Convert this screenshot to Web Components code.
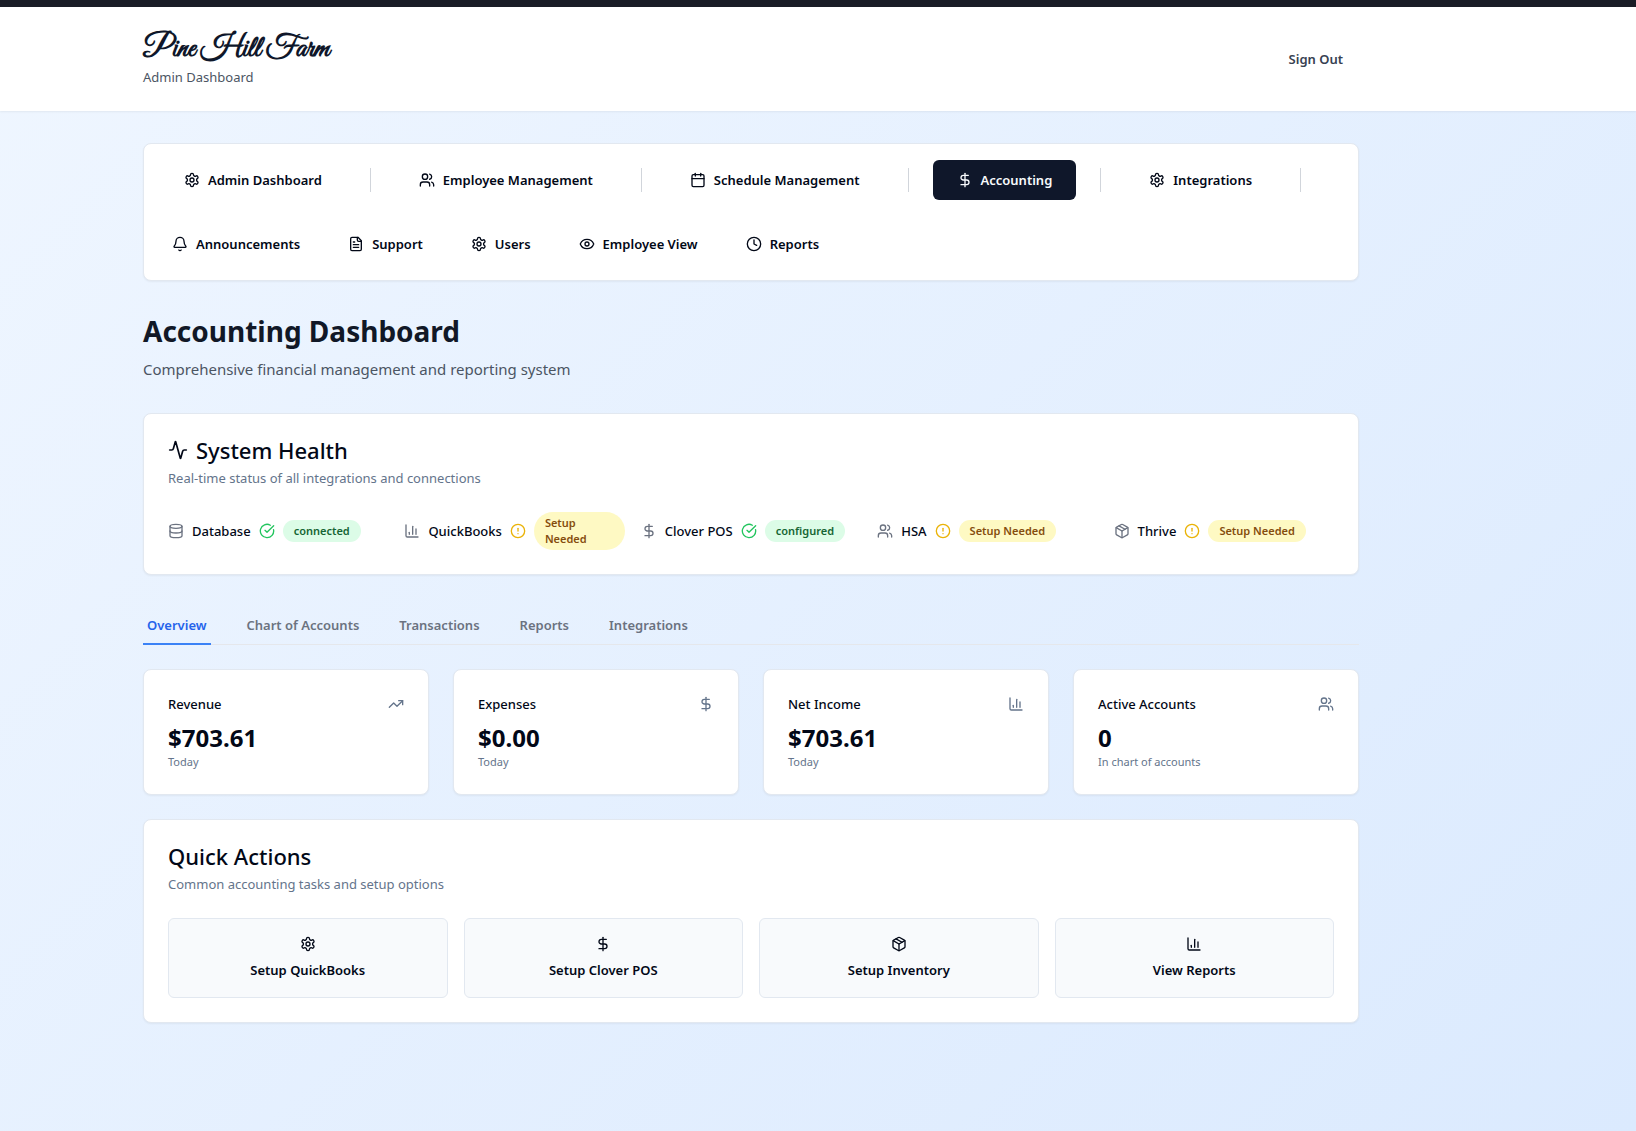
<!DOCTYPE html>
<html lang="en">
<head>
<meta charset="utf-8">
<title>Pine Hill Farm - Accounting Dashboard</title>
<style>
  body {
    margin: 0;
    min-height: 100vh;
    background: linear-gradient(135deg, #eff6ff 0%, #dbeafe 100%) no-repeat;
    font-family: "Noto Sans", "Open Sans", sans-serif;
    font-size: 13px;
    line-height: 20px;
    color: #020817;
  }
</style>
</head>
<body>
<farm-app></farm-app>
<script>
const ICONS = {
  settings: '<path d="M12.22 2h-.44a2 2 0 0 0-2 2v.18a2 2 0 0 1-1 1.73l-.43.25a2 2 0 0 1-2 0l-.15-.08a2 2 0 0 0-2.73.73l-.22.38a2 2 0 0 0 .73 2.73l.15.1a2 2 0 0 1 1 1.72v.51a2 2 0 0 1-1 1.74l-.15.09a2 2 0 0 0-.73 2.73l.22.38a2 2 0 0 0 2.73.73l.15-.08a2 2 0 0 1 2 0l.43.25a2 2 0 0 1 1 1.73V20a2 2 0 0 0 2 2h.44a2 2 0 0 0 2-2v-.18a2 2 0 0 1 1-1.73l.43-.25a2 2 0 0 1 2 0l.15.08a2 2 0 0 0 2.73-.73l.22-.39a2 2 0 0 0-.73-2.73l-.15-.08a2 2 0 0 1-1-1.74v-.5a2 2 0 0 1 1-1.74l.15-.09a2 2 0 0 0 .73-2.73l-.22-.38a2 2 0 0 0-2.73-.73l-.15.08a2 2 0 0 1-2 0l-.43-.25a2 2 0 0 1-1-1.73V4a2 2 0 0 0-2-2z"/><circle cx="12" cy="12" r="3"/>',
  users: '<path d="M16 21v-2a4 4 0 0 0-4-4H6a4 4 0 0 0-4 4v2"/><circle cx="9" cy="7" r="4"/><path d="M22 21v-2a4 4 0 0 0-3-3.87"/><path d="M16 3.13a4 4 0 0 1 0 7.75"/>',
  calendar: '<path d="M8 2v4"/><path d="M16 2v4"/><rect width="18" height="18" x="3" y="4" rx="2"/><path d="M3 10h18"/>',
  dollar: '<line x1="12" x2="12" y1="2" y2="22"/><path d="M17 5H9.5a3.5 3.5 0 0 0 0 7h5a3.5 3.5 0 0 1 0 7H6"/>',
  bell: '<path d="M10.268 21a2 2 0 0 0 3.464 0"/><path d="M3.262 15.326A1 1 0 0 0 4 17h16a1 1 0 0 0 .74-1.673C19.41 13.956 18 12.499 18 8A6 6 0 0 0 6 8c0 4.499-1.411 5.956-2.738 7.326"/>',
  file: '<path d="M15 2H6a2 2 0 0 0-2 2v16a2 2 0 0 0 2 2h12a2 2 0 0 0 2-2V7Z"/><path d="M14 2v4a2 2 0 0 0 2 2h4"/><path d="M10 9H8"/><path d="M16 13H8"/><path d="M16 17H8"/>',
  eye: '<path d="M2.062 12.348a1 1 0 0 1 0-.696 10.75 10.75 0 0 1 19.876 0 1 1 0 0 1 0 .696 10.75 10.75 0 0 1-19.876 0"/><circle cx="12" cy="12" r="3"/>',
  clock: '<circle cx="12" cy="12" r="10"/><polyline points="12 6 12 12 16 14"/>',
  activity: '<path d="M22 12h-2.48a2 2 0 0 0-1.93 1.46l-2.35 8.36a.25.25 0 0 1-.48 0L9.24 2.18a.25.25 0 0 0-.48 0l-2.35 8.36A2 2 0 0 1 4.49 12H2"/>',
  database: '<ellipse cx="12" cy="5" rx="9" ry="3"/><path d="M3 5V19A9 3 0 0 0 21 19V5"/><path d="M3 12A9 3 0 0 0 21 12"/>',
  chart: '<path d="M3 3v16a2 2 0 0 0 2 2h16"/><path d="M18 17V9"/><path d="M13 17V5"/><path d="M8 17v-3"/>',
  trending: '<polyline points="22 7 13.5 15.5 8.5 10.5 2 17"/><polyline points="16 7 22 7 22 13"/>',
  check: '<path d="M21.801 10A10 10 0 1 1 17 3.335"/><path d="m9 11 3 3L22 4"/>',
  alert: '<circle cx="12" cy="12" r="10"/><line x1="12" x2="12" y1="8" y2="12"/><line x1="12" x2="12.01" y1="16" y2="16"/>',
  box: '<path d="M11 21.73a2 2 0 0 0 2 0l7-4A2 2 0 0 0 21 16V8a2 2 0 0 0-1-1.73l-7-4a2 2 0 0 0-2 0l-7 4A2 2 0 0 0 3 8v8a2 2 0 0 0 1 1.73z"/><path d="M12 22V12"/><polyline points="3.29 7 12 12 20.71 7"/><path d="m7.5 4.27 9 5.15"/>'
};

const define = (name, render) => customElements.define(name, class extends HTMLElement {
  connectedCallback() {
    if (this.shadowRoot) return;
    this.attachShadow({ mode: 'open' }).innerHTML = render(this);
  }
});
const attr = (el, name) => el.getAttribute(name) || '';

/* Line icon; its size comes from --icon-size, its colour from the text. */
define('farm-icon', el => `
  <style>
    :host { display: block; flex: none; width: var(--icon-size, 16px); height: var(--icon-size, 16px); }
    svg { display: block; width: 100%; height: 100%; }
  </style>
  <svg viewBox="0 0 24 24" fill="none" stroke="currentColor" stroke-width="2" stroke-linecap="round" stroke-linejoin="round" aria-hidden="true">${ICONS[attr(el, 'name')]}</svg>`);

define('farm-card', () => `
  <style>
    :host { display: block; box-sizing: border-box; padding: 24px; background: #fff; border: 1px solid #e2e8f0; border-radius: 8px; box-shadow: 0 1px 2px rgb(0 0 0 / .05); }
  </style>
  <slot></slot>`);

define('farm-header', () => `
  <style>
    :host { display: block; background: #fff; border-top: 7px solid #1a1d26; box-shadow: 0 1px 2px rgb(0 0 0 / .06); padding-right: var(--page-gutter); }
    .inner { max-width: 1280px; margin: 0 auto; padding: 24px 32px; box-sizing: border-box; display: flex; justify-content: space-between; align-items: center; }
    .brand { margin: 0; font: 700 30px/36px "Great Vibes", "Liberation Serif", serif; color: #0f172a; }
    p { margin: 0; color: #4b5563; }
    button { font: inherit; font-weight: 600; color: #374151; background: none; border: 0; padding: 8px 16px; cursor: pointer; }
  </style>
  <header class="inner">
    <div><div class="brand">Pine Hill Farm</div><p>Admin Dashboard</p></div>
    <button type="button">Sign Out</button>
  </header>`);

define('nav-item', el => `
  <style>
    :host { display: block; }
    button { display: flex; align-items: center; gap: 8px; height: 40px; padding: 0 24px; border: 0; border-radius: 6px; background: none; color: inherit; font: inherit; font-weight: 600; white-space: nowrap; cursor: pointer; }
    :host([compact]) button { padding: 0 12px; }
    :host([active]) button { background: #0f172a; color: #f8fafc; }
  </style>
  <button type="button"><farm-icon name="${attr(el, 'icon')}"></farm-icon><slot></slot></button>`);

define('farm-nav', () => `
  <style>
    :host { display: block; }
    farm-card { padding: 16px; }
    nav { display: flex; flex-wrap: wrap; align-items: center; gap: 24px; }
    i { width: 1px; height: 24px; background: #d1d5db; }
  </style>
  <farm-card><nav>
    <nav-item icon="settings">Admin Dashboard</nav-item><i></i>
    <nav-item icon="users">Employee Management</nav-item><i></i>
    <nav-item icon="calendar">Schedule Management</nav-item><i></i>
    <nav-item icon="dollar" active>Accounting</nav-item><i></i>
    <nav-item icon="settings">Integrations</nav-item><i></i>
    <nav-item compact icon="bell">Announcements</nav-item>
    <nav-item compact icon="file">Support</nav-item>
    <nav-item compact icon="settings">Users</nav-item>
    <nav-item compact icon="eye">Employee View</nav-item>
    <nav-item compact icon="clock">Reports</nav-item>
  </nav></farm-card>`);

define('section-card', el => `
  <style>
    :host { display: block; }
    h2 { display: flex; align-items: center; gap: 8px; margin: 0 0 6px; font-size: 22px; line-height: 24px; font-weight: 500; }
    h2 farm-icon { --icon-size: 20px; }
    p { margin: 0 0 24px; color: #64748b; }
  </style>
  <farm-card>
    <h2>${attr(el, 'icon') ? `<farm-icon name="${attr(el, 'icon')}"></farm-icon>` : ''}${attr(el, 'heading')}</h2>
    <p>${attr(el, 'note')}</p>
    <slot></slot>
  </farm-card>`);

define('health-item', el => {
  const ok = el.hasAttribute('ok');
  return `
  <style>
    :host { display: flex; align-items: center; gap: 8px; min-width: 0; }
    .kind { color: #6b7280; }
    .name { font-weight: 500; white-space: nowrap; }
    .state { color: ${ok ? '#22c55e' : '#eab308'}; }
    .pill { padding: 3px 11px; border-radius: 19px; font-size: 11px; line-height: 16px; font-weight: 600; background: ${ok ? '#dcfce7' : '#fef9c3'}; color: ${ok ? '#166534' : '#854d0e'}; }
  </style>
  <farm-icon class="kind" name="${attr(el, 'icon')}"></farm-icon>
  <span class="name">${attr(el, 'name')}</span>
  <farm-icon class="state" name="${ok ? 'check' : 'alert'}"></farm-icon>
  <span class="pill"><slot></slot></span>`;
});

define('system-health', () => `
  <style>
    :host { display: block; }
    .grid { display: grid; grid-template-columns: repeat(5, minmax(0, 1fr)); gap: 16px; }
  </style>
  <section-card icon="activity" heading="System Health" note="Real-time status of all integrations and connections">
    <div class="grid">
      <health-item ok icon="database" name="Database">connected</health-item>
      <health-item icon="chart" name="QuickBooks">Setup Needed</health-item>
      <health-item ok icon="dollar" name="Clover POS">configured</health-item>
      <health-item icon="users" name="HSA">Setup Needed</health-item>
      <health-item icon="box" name="Thrive">Setup Needed</health-item>
    </div>
  </section-card>`);

define('farm-tabs', () => `
  <style>
    :host { display: block; }
    div { display: flex; gap: 32px; border-bottom: 1px solid #e5e7eb; }
    button { margin: 0 0 -1px; padding: 8px 4px; border: 0; border-bottom: 2px solid transparent; background: none; font: inherit; font-weight: 600; color: #6b7280; cursor: pointer; }
    button[aria-selected="true"] { color: #2563eb; border-color: #3b82f6; }
  </style>
  <div role="tablist">
    <button type="button" role="tab" aria-selected="true">Overview</button>
    <button type="button" role="tab" aria-selected="false">Chart of Accounts</button>
    <button type="button" role="tab" aria-selected="false">Transactions</button>
    <button type="button" role="tab" aria-selected="false">Reports</button>
    <button type="button" role="tab" aria-selected="false">Integrations</button>
  </div>`);

define('stat-card', el => `
  <style>
    :host { display: block; }
    .top { display: flex; align-items: center; justify-content: space-between; margin-bottom: 8px; }
    h3 { margin: 0; font-size: 13px; line-height: 20px; font-weight: 500; }
    farm-icon { color: #64748b; }
    .value { font-size: 24px; line-height: 32px; font-weight: 700; }
    .note { font-size: 11px; line-height: 16px; color: #64748b; }
  </style>
  <farm-card>
    <div class="top"><h3>${attr(el, 'label')}</h3><farm-icon name="${attr(el, 'icon')}"></farm-icon></div>
    <div class="value">${attr(el, 'value')}</div>
    <div class="note"><slot></slot></div>
  </farm-card>`);

define('action-button', el => `
  <style>
    :host { display: block; }
    button { display: flex; flex-direction: column; align-items: center; justify-content: center; gap: 8px; box-sizing: border-box; width: 100%; height: 80px; border: 1px solid #e2e8f0; border-radius: 6px; background: #f8fafc; color: inherit; font: inherit; font-weight: 600; cursor: pointer; }
  </style>
  <button type="button"><farm-icon name="${attr(el, 'icon')}"></farm-icon><span><slot></slot></span></button>`);

define('quick-actions', () => `
  <style>
    :host { display: block; }
    .grid { display: grid; grid-template-columns: repeat(4, minmax(0, 1fr)); gap: 16px; }
  </style>
  <section-card heading="Quick Actions" note="Common accounting tasks and setup options">
    <div class="grid">
      <action-button icon="settings">Setup QuickBooks</action-button>
      <action-button icon="dollar">Setup Clover POS</action-button>
      <action-button icon="box">Setup Inventory</action-button>
      <action-button icon="chart">View Reports</action-button>
    </div>
  </section-card>`);

define('farm-app', () => `
  <style>
    :host { display: block; --page-gutter: 134px; }
    .page { padding-right: var(--page-gutter); }
    main { max-width: 1280px; margin: 0 auto; padding: 32px; box-sizing: border-box; }
    .intro { margin: 32px 0; }
    h1 { margin: 0 0 8px; font-size: 28px; line-height: 36px; font-weight: 700; color: #111827; }
    .intro p { margin: 0; font-size: 15px; line-height: 24px; color: #4b5563; }
    farm-tabs { margin: 32px 0 24px; }
    .stats { display: grid; grid-template-columns: repeat(4, minmax(0, 1fr)); gap: 24px; margin-bottom: 24px; }
  </style>
  <farm-header></farm-header>
  <div class="page"><main>
    <farm-nav></farm-nav>
    <div class="intro">
      <h1>Accounting Dashboard</h1>
      <p>Comprehensive financial management and reporting system</p>
    </div>
    <system-health></system-health>
    <farm-tabs></farm-tabs>
    <div class="stats">
      <stat-card label="Revenue" icon="trending" value="$703.61">Today</stat-card>
      <stat-card label="Expenses" icon="dollar" value="$0.00">Today</stat-card>
      <stat-card label="Net Income" icon="chart" value="$703.61">Today</stat-card>
      <stat-card label="Active Accounts" icon="users" value="0">In chart of accounts</stat-card>
    </div>
    <quick-actions></quick-actions>
  </main></div>`);
</script>
</body>
</html>
